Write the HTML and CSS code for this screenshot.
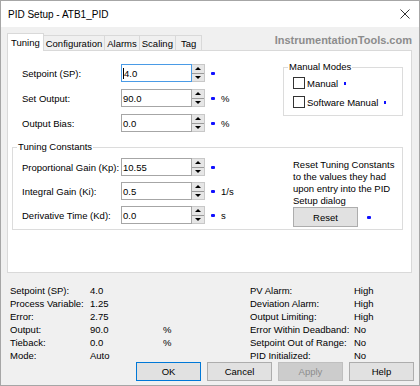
FILE: index.html
```html
<!doctype html>
<html lang="en">
  <head>
    <meta charset="UTF-8" />
    <title>PID Setup - ATB1_PID</title>
    <link rel="stylesheet" href="styles.css">
  </head>
  <body>
    <div class="window">
      <div class="titlebar">
        <span>PID Setup - ATB1_PID</span>
        <svg class="close" width="10" height="10" viewBox="0 0 10 10">
          <path d="M0.5 0.5 L9.5 9.5 M9.5 0.5 L0.5 9.5" stroke="#333" stroke-width="1" />
        </svg>
      </div>

      <div class="body">
        <div class="tabs">
          <span class="tab active">Tuning</span>
          <span class="tab">Configuration</span>
          <span class="tab">Alarms</span>
          <span class="tab">Scaling</span>
          <span class="tab tag">Tag</span>
          <span class="watermark">InstrumentationTools.com</span>
        </div>

        <div class="panel">
          <div class="top">
            <div class="rows">
              <label>Setpoint (SP):</label>
              <div class="field focused"><span class="caret"></span>4.0</div>
              <div class="spin"><span class="up"></span><span class="down"></span></div>
              <span class="dot"></span>
              <span class="unit"></span>

              <label>Set Output:</label>
              <div class="field">90.0</div>
              <div class="spin"><span class="up"></span><span class="down"></span></div>
              <span class="dot"></span>
              <span class="unit">%</span>

              <label>Output Bias:</label>
              <div class="field">0.0</div>
              <div class="spin"><span class="up"></span><span class="down"></span></div>
              <span class="dot"></span>
              <span class="unit">%</span>
            </div>

            <div class="group manual">
              <div class="group-title">Manual Modes</div>
              <div class="checks">
                <div class="check"><span class="box"></span>Manual<span class="mini-dot"></span></div>
                <div class="check"><span class="box"></span>Software Manual<span class="mini-dot"></span></div>
              </div>
            </div>
          </div>

          <div class="group tuning">
            <div class="group-title">Tuning Constants</div>
            <div class="tuning-body">
              <div class="rows">
                <label>Proportional Gain (Kp):</label>
                <div class="field">10.55</div>
                <div class="spin"><span class="up"></span><span class="down"></span></div>
                <span class="dot"></span>
                <span class="unit"></span>

                <label>Integral Gain (Ki):</label>
                <div class="field">0.5</div>
                <div class="spin"><span class="up"></span><span class="down"></span></div>
                <span class="dot"></span>
                <span class="unit">1/s</span>

                <label>Derivative Time (Kd):</label>
                <div class="field">0.0</div>
                <div class="spin"><span class="up"></span><span class="down"></span></div>
                <span class="dot"></span>
                <span class="unit">s</span>
              </div>

              <div class="reset">
                <p>Reset Tuning Constants<br>to the values they had<br>upon entry into the PID<br>Setup dialog</p>
                <div class="reset-line">
                  <button class="btn">Reset</button>
                  <span class="dot"></span>
                </div>
              </div>
            </div>
          </div>
        </div>

        <div class="status">
          <div class="stat-left">
            <span>Setpoint (SP):</span><span>4.0</span><span></span>
            <span>Process Variable:</span><span>1.25</span><span></span>
            <span>Error:</span><span>2.75</span><span></span>
            <span>Output:</span><span>90.0</span><span>%</span>
            <span>Tieback:</span><span>0.0</span><span>%</span>
            <span>Mode:</span><span>Auto</span><span></span>
          </div>
          <div class="stat-right">
            <span>PV Alarm:</span><span>High</span>
            <span>Deviation Alarm:</span><span>High</span>
            <span>Output Limiting:</span><span>High</span>
            <span>Error Within Deadband:</span><span>No</span>
            <span>Setpoint Out of Range:</span><span>No</span>
            <span>PID Initialized:</span><span>No</span>
          </div>
        </div>

        <div class="buttons">
          <button class="btn ok">OK</button>
          <button class="btn">Cancel</button>
          <button class="btn apply">Apply</button>
          <button class="btn">Help</button>
        </div>
      </div>
    </div>
  </body>
</html>
```

FILE: styles.css
```css
* {
  box-sizing: border-box;
}
body {
  margin: 0;
  font-family: "Liberation Sans", Arial, sans-serif;
  font-size: 9.5px;
  color: #000;
}
.window {
  width: 420px;
  height: 386px;
  border: 1px solid #a6a6a6;
  background: #f0f0f0;
  display: flex;
  flex-direction: column;
}
.titlebar {
  height: 26px;
  flex: none;
  background: #fff;
  display: flex;
  align-items: center;
  justify-content: space-between;
  padding: 0 9px 0 7px;
  font-size: 10px;
}
.body {
  flex: 1;
  padding: 6px 7px 0 6px;
}

/* tabs */
.tabs {
  display: flex;
  align-items: flex-end;
}
.tab {
  height: 15px;
  padding: 0 2px;
  display: flex;
  align-items: center;
  border: 1px solid #d9d9d9;
  border-bottom: none;
  border-left: none;
  background: #f0f0f0;
}
.tab.active {
  height: 18px;
  padding: 0 3px;
  margin-bottom: -1px;
  border-left: 1px solid #d9d9d9;
  background: #fff;
  position: relative;
  z-index: 1;
}
.tab.tag {
  padding: 0 5px;
}
.watermark {
  margin-left: auto;
  align-self: center;
  margin-bottom: 3px;
  font-size: 11px;
  font-weight: bold;
  color: #8c8c8c;
}

/* panel */
.panel {
  height: 223px;
  border: 1px solid #d9d9d9;
  background: #fff;
  padding: 10px 8px 0 4px;
}
.top {
  display: flex;
  padding-left: 10px;
}
.rows {
  display: grid;
  grid-template-columns: 99px 71px 13px 16px auto;
  grid-auto-rows: 18px;
  row-gap: 7px;
  align-items: center;
  margin-top: 3px;
}
.field {
  height: 18px;
  border: 1px solid #a6a6a6;
  padding-left: 1px;
  display: flex;
  align-items: center;
}
.field.focused {
  border-color: #4a9be6;
}
.caret {
  width: 1px;
  height: 11px;
  background: #000;
}
.spin {
  height: 18px;
  display: flex;
  flex-direction: column;
  border: 1px solid #c8c8c8;
  border-left: none;
  background: #e6e6e6;
}
.spin span {
  flex: 1;
  display: flex;
  align-items: center;
  justify-content: center;
}
.spin .up {
  border-bottom: 1px solid #9a9a9a;
}
.spin .up::before,
.spin .down::before {
  content: "";
  border-left: 3px solid transparent;
  border-right: 3px solid transparent;
}
.spin .up::before {
  border-bottom: 3px solid #000;
}
.spin .down::before {
  border-top: 3px solid #000;
}
.dot {
  width: 4px;
  height: 3px;
  margin-left: 6px;
  background: #1010ff;
  border-radius: 1px;
}

/* group boxes */
.group {
  border: 1px solid #dcdcdc;
}
.group-title {
  width: fit-content;
  background: #fff;
  line-height: 12px;
  margin: -7px 0 0 4px;
  padding: 0 1px;
}
.manual {
  margin-left: auto;
  margin-top: 6px;
  width: 120px;
  align-self: flex-start;
}
.checks {
  display: flex;
  flex-direction: column;
  gap: 7px;
  padding: 4px 0 7px 9px;
}
.check {
  display: flex;
  align-items: center;
  height: 12px;
}
.box {
  width: 12px;
  height: 12px;
  border: 1px solid #333;
  background: #fff;
  margin-right: 2px;
}
.mini-dot {
  width: 2px;
  height: 3px;
  margin-left: 6px;
  background: #1010ff;
}
.tuning {
  margin-top: 15px;
}
.tuning-body {
  display: flex;
  padding: 5px 0 2px 9px;
}
.tuning .rows {
  margin-top: 0;
  row-gap: 6px;
}
.reset {
  margin-left: auto;
  width: 109px;
}
.reset p {
  margin: 1px 0 0;
  line-height: 12px;
}
.reset-line {
  display: flex;
  align-items: center;
  gap: 3px;
}
.reset-line .btn {
  height: 20px;
}

/* status */
.status {
  display: flex;
  margin-top: 11px;
  padding-left: 3px;
  line-height: 13px;
}
.stat-left {
  display: grid;
  grid-template-columns: 80px 73px auto;
  width: 240px;
}
.stat-right {
  display: grid;
  grid-template-columns: 104px auto;
}

/* buttons */
.buttons {
  display: flex;
  justify-content: flex-end;
  gap: 6px;
  margin-right: -2px;
}
.btn {
  width: 65px;
  height: 19px;
  padding: 0;
  font: inherit;
  color: #000;
  background: #e1e1e1;
  border: 1px solid #adadad;
}
.btn.ok {
  border-color: #0078d7;
}
.btn.apply {
  background: #cccccc;
  border-color: #bfbfbf;
  color: #8c8c8c;
}
```
